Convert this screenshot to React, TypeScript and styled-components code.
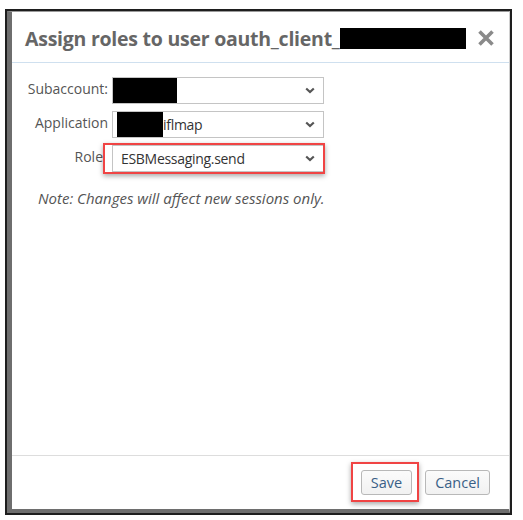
import { createGlobalStyle, styled } from "styled-components";

const GlobalStyle = createGlobalStyle`
  html, body {
    margin: 0;
    padding: 0;
    background: #ffffff;
  }
  body {
    font-family: "Open Sans", "Noto Sans", sans-serif;
  }
`;

const Page = styled.div`
  width: 523px;
  height: 520px;
  padding: 9px 0 0 5px;
  box-sizing: border-box;
`;

const Frame = styled.div`
  width: 507px;
  height: 506px;
  box-sizing: border-box;
  border: 2px solid #1e1e1e;
  background: #ffffff;
`;

const Dialog = styled.div`
  width: 100%;
  height: 100%;
  box-sizing: border-box;

  display: flex;
  flex-direction: column;

  border-left: 5px solid #6e6e6e;
  border-bottom: 4px solid #6e6e6e;
  border-top: 1px solid #9a9a9a;
  border-right: 1px solid #d0d0d0;
`;

const Header = styled.div`
  height: 51px;
  flex-shrink: 0;

  display: flex;
  align-items: center;
  justify-content: space-between;

  padding: 2px 14px 0 13px;
  box-sizing: border-box;
  border-bottom: 1px solid #cfe0ef;
`;

const Title = styled.div`
  display: flex;
  align-items: center;

  font-family: "Open Sans", sans-serif;
  font-weight: 700;
  font-size: 19.5px;
  letter-spacing: -0.25px;
  color: #666666;
`;

const Redact = styled.span<{ $w: number; $h: number }>`
  display: inline-block;
  flex-shrink: 0;
  width: ${(p) => p.$w}px;
  height: ${(p) => p.$h}px;
  background: #000000;
`;

const CloseButton = styled.div`
  width: 18px;
  height: 18px;
  display: flex;
  align-items: center;
  justify-content: center;
  cursor: pointer;
`;

const Body = styled.div`
  flex: 1;
  padding: 14px 0 0 12px;
`;

const Form = styled.div`
  display: grid;
  grid-template-columns: 84px 212px;
  column-gap: 4px;
  row-gap: 7px;
`;

const Label = styled.div`
  height: 27px;
  display: flex;
  align-items: center;
  justify-content: flex-end;
  padding-bottom: 4px;
  box-sizing: border-box;

  font-size: 14px;
  color: #555555;
  white-space: nowrap;
`;

const RoleLabel = styled(Label)`
  padding-right: 5px;
`;

const SelectWrap = styled.div`
  position: relative;
`;

const Select = styled.div`
  height: 27px;
  box-sizing: border-box;

  display: flex;
  align-items: center;
  justify-content: space-between;

  border: 1px solid #c4c4c4;
  background: #ffffff;
  padding: 0 8px 0 0;

  font-size: 14px;
  letter-spacing: -0.3px;
  color: #333333;
`;

const SelectValue = styled.div<{ $indent: number }>`
  display: flex;
  align-items: center;
  height: 100%;
  padding-left: ${(p) => p.$indent}px;
`;

const Highlight = styled.div<{ $t: number; $r: number; $b: number; $l: number }>`
  position: absolute;
  top: ${(p) => p.$t}px;
  right: ${(p) => p.$r}px;
  bottom: ${(p) => p.$b}px;
  left: ${(p) => p.$l}px;

  border: 2px solid #f04444;
  box-shadow: 0 2px 5px rgba(0, 0, 0, 0.35);
  pointer-events: none;
`;

const Note = styled.div`
  margin: 16px 0 0 14px;
  font-size: 15px;
  font-style: italic;
  color: #555555;
`;

const Footer = styled.div`
  height: 54px;
  flex-shrink: 0;

  display: flex;
  align-items: center;
  justify-content: flex-end;
  gap: 13px;

  padding: 0 19px 0 0;
  border-top: 1px solid #dddddd;
  box-sizing: border-box;
`;

const ButtonWrap = styled.div`
  position: relative;
`;

const Button = styled.div`
  height: 25px;
  box-sizing: border-box;
  padding: 0 9px;

  display: flex;
  align-items: center;

  border: 1px solid #b8b8b8;
  border-radius: 3px;
  background: linear-gradient(#fbfbfb, #f1f1f1);

  font-size: 14.5px;
  color: #3a5f86;
  cursor: pointer;
`;

const Chevron = () => (
  <svg width="10" height="7" viewBox="0 0 10 7">
    <path d="M1.2 1.5 L5 5 L8.8 1.5" fill="none" stroke="#555" strokeWidth="2.2" />
  </svg>
);

const CloseIcon = () => (
  <svg width="18" height="18" viewBox="0 0 18 18">
    <path d="M2.5 2.5 L15.5 15.5 M15.5 2.5 L2.5 15.5" stroke="#8a8a8a" strokeWidth="3.6" />
  </svg>
);

const App = () => {
  return (
    <Page>
      <GlobalStyle />
      <Frame>
        <Dialog>
          <Header>
            <Title>
              Assign roles to user oauth_client_
              <Redact $w={126} $h={21} />
            </Title>
            <CloseButton>
              <CloseIcon />
            </CloseButton>
          </Header>

          <Body>
            <Form>
              <Label>Subaccount:</Label>
              <Select>
                <SelectValue $indent={0}>
                  <Redact $w={64} $h={25} />
                </SelectValue>
                <Chevron />
              </Select>

              <Label>Application</Label>
              <Select>
                <SelectValue $indent={4}>
                  <Redact $w={46} $h={25} />
                  iflmap
                </SelectValue>
                <Chevron />
              </Select>

              <RoleLabel>Role</RoleLabel>
              <SelectWrap>
                <Select>
                  <SelectValue $indent={8}>ESBMessaging.send</SelectValue>
                  <Chevron />
                </Select>
                <Highlight $t={-2} $r={-1} $b={-2} $l={-9} />
              </SelectWrap>
            </Form>

            <Note>Note: Changes will affect new sessions only.</Note>
          </Body>

          <Footer>
            <ButtonWrap>
              <Button>Save</Button>
              <Highlight $t={-8} $r={-7} $b={-7} $l={-10} />
            </ButtonWrap>
            <Button>Cancel</Button>
          </Footer>
        </Dialog>
      </Frame>
    </Page>
  );
};

export default App;
